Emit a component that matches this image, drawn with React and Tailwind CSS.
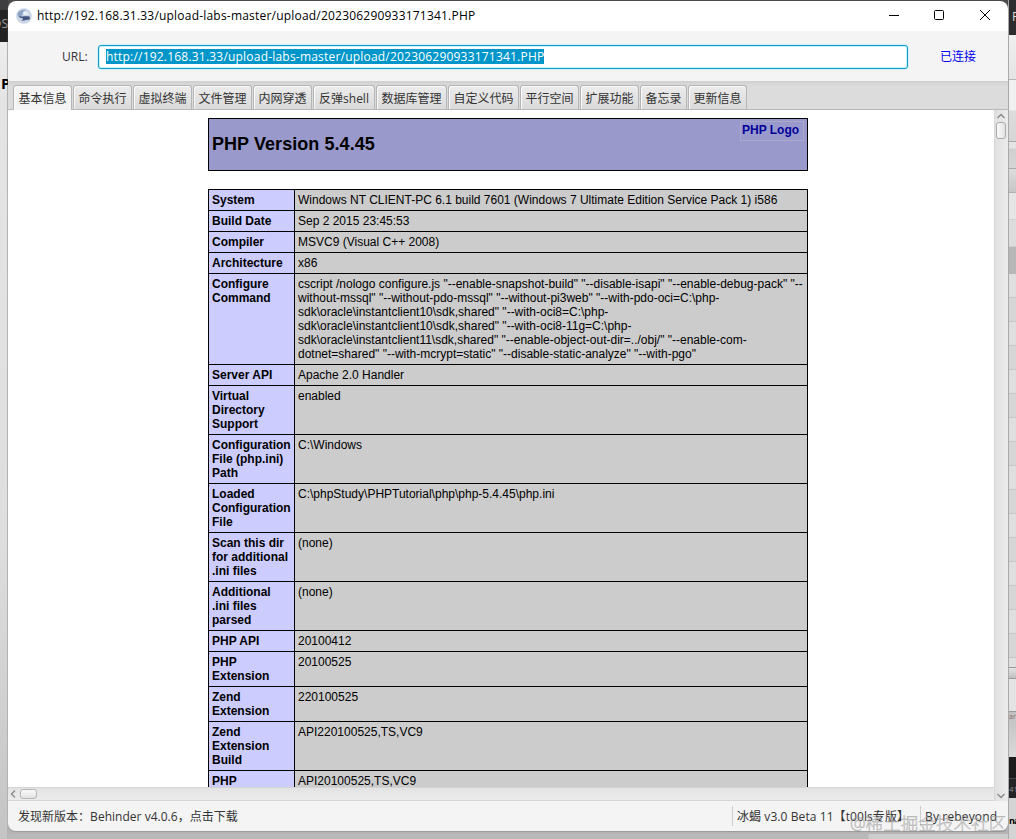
import React from "react";

const ADDRESS = "http://192.168.31.33/upload-labs-master/upload/202306290933171341.PHP";

const TABS = [
  { label: "基本信息", width: "w-[59px]", active: true },
  { label: "命令执行", width: "w-[59px]" },
  { label: "虚拟终端", width: "w-[59px]" },
  { label: "文件管理", width: "w-[59px]" },
  { label: "内网穿透", width: "w-[59px]" },
  { label: "反弹shell", width: "w-[62px]" },
  { label: "数据库管理", width: "w-[71px]" },
  { label: "自定义代码", width: "w-[71px]" },
  { label: "平行空间", width: "w-[59px]" },
  { label: "扩展功能", width: "w-[59px]" },
  { label: "备忘录", width: "w-[47px]" },
  { label: "更新信息", width: "w-[59px]" },
];

const ROWS = [
  [["System"], ["Windows NT CLIENT-PC 6.1 build 7601 (Windows 7 Ultimate Edition Service Pack 1) i586"]],
  [["Build Date"], ["Sep 2 2015 23:45:53"]],
  [["Compiler"], ["MSVC9 (Visual C++ 2008)"]],
  [["Architecture"], ["x86"]],
  [
    ["Configure", "Command"],
    [
      'cscript /nologo configure.js "--enable-snapshot-build" "--disable-isapi" "--enable-debug-pack" "--',
      'without-mssql" "--without-pdo-mssql" "--without-pi3web" "--with-pdo-oci=C:\\php-',
      'sdk\\oracle\\instantclient10\\sdk,shared" "--with-oci8=C:\\php-',
      'sdk\\oracle\\instantclient10\\sdk,shared" "--with-oci8-11g=C:\\php-',
      'sdk\\oracle\\instantclient11\\sdk,shared" "--enable-object-out-dir=../obj/" "--enable-com-',
      'dotnet=shared" "--with-mcrypt=static" "--disable-static-analyze" "--with-pgo"',
    ],
  ],
  [["Server API"], ["Apache 2.0 Handler"]],
  [["Virtual", "Directory", "Support"], ["enabled"]],
  [["Configuration", "File (php.ini)", "Path"], ["C:\\Windows"]],
  [["Loaded", "Configuration", "File"], ["C:\\phpStudy\\PHPTutorial\\php\\php-5.4.45\\php.ini"]],
  [["Scan this dir", "for additional", ".ini files"], ["(none)"]],
  [["Additional", ".ini files", "parsed"], ["(none)"]],
  [["PHP API"], ["20100412"]],
  [["PHP", "Extension"], ["20100525"]],
  [["Zend", "Extension"], ["220100525"]],
  [["Zend", "Extension", "Build"], ["API220100525,TS,VC9"]],
  [["PHP"], ["API20100525,TS,VC9"]],
];

const LIST_ROWS = Array.from({ length: 16 }, (_, i) => i);

function Lines({ items }) {
  return items.map((t, i) => <div key={i}>{t}</div>);
}

function AppIcon() {
  return (
    <svg width="16" height="16" viewBox="0 0 16 16">
      <circle cx="8" cy="8" r="7.8" fill="#c9d5e6" />
      <path d="M1.2 6C3 2.5 7 1 10 2.2 8 3 6 5 6.500 7L3 9.500Z" fill="#8fa3c5" />
      <path d="M3 7.500C5 9.500 9 7.500 13.500 8.500L14 11.500C11 11 9 13 5 12.500 7 11.800 8 10.500 6 10.300 4 10 3 9 3 7.500Z" fill="#41547e" />
      <path d="M7 4C9 3 12 4 13 6.500L8 7Z" fill="#e9eff7" />
    </svg>
  );
}

function TitleBar() {
  return (
    <div className="flex h-[30px] shrink-0 items-center bg-white pl-2">
      <AppIcon />
      <span className="ml-[5px] grow text-[12px] leading-4 tracking-[0.205px] text-black">{ADDRESS}</span>
      <svg width="120" height="30" viewBox="0 0 120 30" fill="none" stroke="#000" className="shrink-0">
        <path d="M1 14.500h10" />
        <rect x="46.500" y="9.500" width="9" height="9" rx="1" />
        <path d="M92 9l10 10M102 9l-10 10" />
      </svg>
    </div>
  );
}

function AddressBar() {
  return (
    <div className="flex h-[50px] shrink-0 items-center bg-[#f4f4f4] pl-[54px] text-[12px] leading-4 text-[#333]">
      <span className="w-9 pt-0.5">URL:</span>
      <div className="mt-px flex h-6 w-[810px] items-center rounded-[3px] border border-[#169ac9] bg-white px-[7px] shadow-[inset_0_0_0_1px_#c5f2fb,0_0_0_1px_#d3f1f8]">
        <span className="h-[15px] bg-[#0096c9] leading-[15px] tracking-[0.205px] text-white">{ADDRESS}</span>
      </div>
      <span className="ml-8 pt-0.5 text-[#0000ee]">已连接</span>
    </div>
  );
}

function TabStrip() {
  return (
    <div className="flex h-[29px] shrink-0 items-end gap-px border-b border-[#b8b8b8] bg-[linear-gradient(#cfcfcf,#dcdcdc_5px,#dcdcdc)] pl-[5px]">
      {TABS.map((t) => (
        <div
          key={t.label}
          className={
            t.width +
            " flex shrink-0 items-center justify-center whitespace-nowrap rounded-t-[3px] border border-b-0 border-[#b5b5b5] text-[12px] leading-4 text-[#333] shadow-[inset_1px_1px_0_#fafafa] " +
            (t.active ? "-mb-px h-[25px] bg-[#f4f4f4] pt-px" : "h-6 bg-[linear-gradient(#ececec,#dadada)] pt-0.5")
          }
        >
          {t.label}
        </div>
      ))}
    </div>
  );
}

function PhpInfo() {
  return (
    <div className="h-full w-[600px] overflow-hidden pt-2 font-['Liberation_Sans',Arial,sans-serif] text-[12px] leading-[14px] text-black">
      <div className="flex h-[53px] justify-between border border-black bg-[#9999cc] pl-[3px]">
        <h1 className="self-center pb-px text-[18px] font-bold leading-5 tracking-[0.06px]">PHP Version 5.4.45</h1>
        <a className="mr-[3px] mt-[2px] h-[20px] w-[64px] border border-[#a9a9cb] pl-px text-[12px] font-bold leading-[17px] text-[#000099]">
          PHP Logo
        </a>
      </div>
      <div className="mt-[18px] border-x border-t border-black">
        {ROWS.map(([k, v], i) => (
          <div key={i} className="flex border-b border-black">
            <div className="w-[86px] shrink-0 whitespace-nowrap border-r border-black bg-[#ccccff] p-[3px] font-bold">
              <Lines items={k} />
            </div>
            <div className="grow whitespace-nowrap bg-[#cccccc] p-[3px]">
              <Lines items={v} />
            </div>
          </div>
        ))}
      </div>
    </div>
  );
}

function Chevron({ d }) {
  return (
    <svg width="8" height="8" viewBox="0 0 8 8" fill="none" stroke="#888" strokeWidth="1.300" className="shrink-0">
      <path d={d} />
    </svg>
  );
}

function Body() {
  return (
    <div className="flex h-[691px] shrink-0">
      <div className="flex w-[986px] flex-col">
        <div className="h-[677px] bg-white pl-[200px]">
          <PhpInfo />
        </div>
        <div className="flex h-3.5 items-center gap-[3px] border-y border-[#d5d5d5] bg-[linear-gradient(#e3e3e3,#ececec)] pl-px">
          <Chevron d="M6 0.500L2.500 4 6 7.500" />
          <div className="h-[10px] w-[17px] rounded-[3px] border border-[#b5b5b5] bg-[linear-gradient(#fafafa,#e2e2e2)]" />
        </div>
      </div>
      <div className="flex w-3.5 flex-col items-start border-l border-[#d8d8d8] bg-[linear-gradient(90deg,#e0e0e0,#ececec)] pl-px">
        <div className="flex h-3 items-center pl-px">
          <Chevron d="M0.500 6L4 2.500 7.500 6" />
        </div>
        <div className="h-[17px] w-[10px] shrink-0 rounded-[3px] border border-[#aaa] bg-[linear-gradient(90deg,#fafafa,#e2e2e2)]" />
        <div className="mt-auto pb-px pl-px">
          <Chevron d="M0.500 2L4 5.500 7.500 2" />
        </div>
      </div>
    </div>
  );
}

function StatusBar() {
  return (
    <div className="flex h-[30px] shrink-0 items-center bg-[#f4f4f4] pl-[10px] text-[12px] leading-4 text-[#333]">
      <span className="w-[714px] pt-0.5 tracking-[0.02px]">发现新版本：Behinder v4.0.6，点击下载</span>
      <span className="flex h-5 w-[188px] items-center whitespace-nowrap border-l border-[#cfcfcf] pl-1 pt-0.5 tracking-[0.08px]">
        冰蝎 v3.0 Beta 11【t00ls专版】
      </span>
      <span className="flex h-5 items-center whitespace-nowrap border-l border-[#cfcfcf] pl-1 pt-0.5 tracking-[0.15px]">
        By rebeyond
      </span>
    </div>
  );
}

function LeftDesktop() {
  return (
    <div className="flex h-full w-2 shrink-0 flex-col overflow-hidden text-black">
      <div className="h-[10px] shrink-0 bg-[#3e3e41]" />
      <div className="flex h-8 shrink-0 items-center justify-end bg-[#232323] pb-1 text-[12px] text-[#999]">OS</div>
      <div className="h-full border-r border-[#b5b5b5] bg-[linear-gradient(#ededed,#e4e4e4_60px,#dedede_500px,#c4c4c4)] pl-px pt-[31px] text-[15px] font-bold leading-5">
        P
      </div>
    </div>
  );
}

function RightDesktop() {
  return (
    <div className="flex h-full w-2 shrink-0 flex-col overflow-hidden border-l border-[#a9a9a9] bg-[#e4e4e4]">
      <div className="h-[35px] shrink-0 bg-[#2d2d2f] pl-[3px] pt-[9px] text-[12px] leading-4 text-[#ddd]">P</div>
      <div className="h-[45px] shrink-0 border-b border-[#b5b5b5] bg-[linear-gradient(#f0f0f0,#e4e4e4)]" />
      <div className="h-[62px] shrink-0 border-b border-[#aaa] bg-[linear-gradient(#f0f0f0_30px,#dcdcdc_31px,#d5d5d5)]" />
      <div className="h-[27px] shrink-0 border-b border-[#aaa] bg-[linear-gradient(#e4e4e4_6px,#cfcfcf_7px,#d6d6d6)]" />
      <div className="h-6 shrink-0 border-b border-[#b0b0b0] bg-[linear-gradient(#dcdcdc,#c6c6c6)]" />
      <div className="h-[27px] shrink-0 border-b border-[#cfcfcf] bg-[#e5e5e5]" />
      <div className="h-[27px] shrink-0 border-b border-[#cfcfcf] bg-[#dcdcdc]" />
      <div className="h-[27px] shrink-0 bg-[#b7b7b7]" />
      {LIST_ROWS.map((i) => (
        <div key={i} className={"h-6 shrink-0 border-b border-[#c5c5c5] " + (i % 2 ? "bg-[#d6d6d6]" : "bg-[#dfdfdf]")} />
      ))}
      <div className="h-[10px] shrink-0 border-b border-[#999] bg-[#e0e0e0]" />
      <div className="h-[11px] shrink-0 border-b border-[#999] bg-[linear-gradient(#e4e4e4,#bebebe)]" />
      <div className="h-8 shrink-0 bg-[#e4e4e4]" />
      <div className="h-[46px] shrink-0 border-t border-[#999] bg-[linear-gradient(#bfbfbf,#dadada)] text-[7px] leading-[9px] text-[#8a6a6a]">ar</div>
      <div className="h-[21px] shrink-0 bg-[#1c1c1c]" />
      <div className="h-5 shrink-0 border-t border-[#444] bg-[#232325] text-[8px] leading-5 text-[#888]">41</div>
      <div className="grow bg-[#d4d4d4] pt-[15px] text-[9px] font-bold leading-4 tracking-[-1px] text-black">na</div>
    </div>
  );
}

export default function App() {
  return (
    <div className="relative flex h-[839px] w-[1016px] overflow-hidden bg-[#c6c6c6] font-['Open_Sans','Noto_Sans_CJK_SC',sans-serif]">
      <LeftDesktop />
      <div className="flex h-full w-[1000px] shrink-0 flex-col bg-[linear-gradient(#4a4a4c_0,#4a4a4c_42px,#c0c0c0_43px,#b6b6b6)] pt-px">
        <div className="flex h-[830px] shrink-0 flex-col overflow-hidden rounded-lg shadow-[0_1px_1px_#999]">
          <TitleBar />
          <AddressBar />
          <TabStrip />
          <Body />
          <StatusBar />
        </div>
        <div className="mt-[3px] grow bg-[linear-gradient(90deg,#b9b9b9_860px,#cdcdcd_861px)]" />
      </div>
      <RightDesktop />
      <div className="absolute left-[850px] top-[811px] whitespace-nowrap text-[17.6px] font-light leading-6 text-white/40 [-webkit-text-stroke:0.5px_rgba(120,120,120,0.6)]">
        @稀土掘金技术社区
      </div>
    </div>
  );
}
